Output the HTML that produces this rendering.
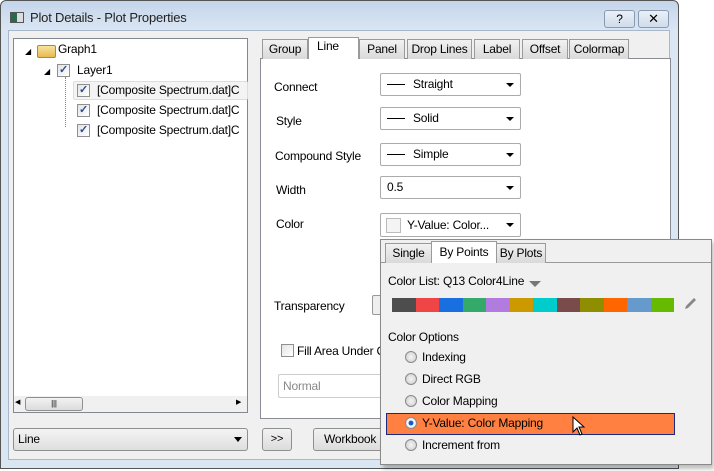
<!DOCTYPE html>
<html><head><style>
*{box-sizing:border-box;margin:0;padding:0}
body{width:714px;height:471px;background:#fff;font-family:"Liberation Sans",sans-serif;font-size:12px;color:#000;position:relative;overflow:hidden;letter-spacing:-0.2px}
.a{position:absolute}
.win{left:0;top:0;width:679px;height:469px;border:1px solid #555;border-radius:6px 6px 0 0;background:linear-gradient(#c4d5ea,#dbe6f3 30px,#dbe6f3)}
.client{left:8px;top:30px;width:662px;height:430px;background:#f0f0f0;border:1px solid #a8b8cc}
.btn{border:1px solid #8e8f8f;border-radius:3px;background:linear-gradient(#f2f2f2,#dcdcdc)}
.tab{top:39px;height:20px;border:1px solid #9a9a9a;border-bottom:none;background:linear-gradient(#f2f2f2,#d9d9d9);text-align:center;line-height:19px}
.combo{left:380px;width:141px;height:23px;border:1px solid #ababab;border-radius:2px;background:#fff;padding-left:6px;line-height:21px}
.combo:after{content:"";position:absolute;right:6px;top:9px;border:4px solid transparent;border-top:4px solid #000;border-bottom:none}
.dash{display:inline-block;width:18px;border-top:1px solid #000;vertical-align:middle;margin-right:8px}
.cb{width:13px;height:13px;border:1px solid #8f8f8f;background:linear-gradient(135deg,#e4e4e4,#fff)}
.ck{color:#2a4a9a;font-size:11px;line-height:11px;text-align:center;font-weight:bold}
.radio{width:12px;height:12px;border-radius:50%;border:1px solid #8a8a8a;background:radial-gradient(#f4f4f4,#ccc)}
</style></head><body>
<div class="a win"></div>
<div class="a" style="left:10px;top:12px;width:14px;height:11px;border:1px solid #555;background:linear-gradient(90deg,#2a6a4a 50%,#ddd 50%)"></div>
<div class="a" style="left:30px;top:10px;font-size:13px;color:#222">Plot Details - Plot Properties</div>
<div class="a btn" style="left:604px;top:10px;width:31px;height:18px;text-align:center;line-height:16px;background:linear-gradient(#eaf0f8,#d0dcea);border-color:#8a9ab0">?</div>
<div class="a btn" style="left:638px;top:10px;width:31px;height:18px;text-align:center;line-height:16px;background:linear-gradient(#eaf0f8,#d0dcea);border-color:#8a9ab0;font-size:13px">✕</div>
<div class="a client"></div>
<!-- tree -->
<div class="a" style="left:13px;top:38px;width:235px;height:375px;background:#fff;border:1px solid #828790"></div>
<div class="a" style="left:25px;top:47px;font-size:8px">◢</div>
<div class="a" style="left:37px;top:45px;width:19px;height:13px;background:linear-gradient(#f8e4a0,#e8b850);border:1px solid #b08a30;border-radius:2px"></div>
<div class="a" style="left:58px;top:42px">Graph1</div>
<div class="a" style="left:44px;top:67px;font-size:8px">◢</div>
<div class="a cb ck" style="left:57px;top:64px">✓</div>
<div class="a" style="left:77px;top:63px">Layer1</div>
<div class="a" style="left:73px;top:81px;width:175px;height:19px;background:#f4f4f4;border:1px solid #ddd;border-radius:2px"></div>
<div class="a" style="left:65px;top:77px;height:50px;border-left:1px dotted #888"></div>
<div class="a cb ck" style="left:77px;top:84px">✓</div>
<div class="a" style="left:97px;top:83px;width:150px;overflow:hidden;white-space:nowrap">[Composite Spectrum.dat]C</div>
<div class="a cb ck" style="left:77px;top:104px">✓</div>
<div class="a" style="left:97px;top:103px;width:150px;overflow:hidden;white-space:nowrap">[Composite Spectrum.dat]C</div>
<div class="a cb ck" style="left:77px;top:124px">✓</div>
<div class="a" style="left:97px;top:123px;width:150px;overflow:hidden;white-space:nowrap">[Composite Spectrum.dat]C</div>
<div class="a" style="left:14px;top:396px;width:233px;height:16px;background:#f0f0f0"></div>
<div class="a btn" style="left:25px;top:397px;width:58px;height:14px;text-align:center;font-size:8px;line-height:12px">|||</div>
<div class="a" style="left:15px;top:398px;font-size:7px">◀</div>
<div class="a" style="left:236px;top:398px;font-size:7px">▶</div>
<!-- tabs -->
<div class="a" style="left:260px;top:58px;width:411px;height:361px;background:#fff;border:1px solid #898c95"></div>
<div class="a tab" style="left:262px;width:46px">Group</div>
<div class="a tab" style="left:308px;top:37px;width:51px;height:22px;background:#fff;text-align:left;padding-left:8px;line-height:17px">Line</div>
<div class="a tab" style="left:359px;width:46px">Panel</div>
<div class="a tab" style="left:407px;width:65px">Drop Lines</div>
<div class="a tab" style="left:474px;width:46px">Label</div>
<div class="a tab" style="left:522px;width:46px">Offset</div>
<div class="a tab" style="left:569px;width:60px">Colormap</div>
<div class="a" style="left:274px;top:80px">Connect</div>
<div class="a" style="left:276px;top:114px">Style</div>
<div class="a" style="left:275px;top:149px">Compound Style</div>
<div class="a" style="left:276px;top:183px">Width</div>
<div class="a" style="left:276px;top:217px">Color</div>
<div class="a" style="left:274px;top:299px">Transparency</div>
<div class="a combo" style="top:73px"><span class="dash"></span>Straight</div>
<div class="a combo" style="top:107px"><span class="dash"></span>Solid</div>
<div class="a combo" style="top:143px"><span class="dash"></span>Simple</div>
<div class="a combo" style="top:176px">0.5</div>
<div class="a combo btn" style="top:213px;height:24px;padding-left:26px;line-height:22px">Y-Value: Color...</div>
<div class="a" style="left:386px;top:218px;width:15px;height:15px;border:1px solid #bbb;background:#f4f4f4"></div>
<div class="a" style="left:372px;top:295px;width:10px;height:20px;border:1px solid #999;border-radius:2px;background:#eee"></div>
<div class="a cb" style="left:281px;top:344px"></div>
<div class="a" style="left:297px;top:344px">Fill Area Under C</div>
<div class="a" style="left:278px;top:374px;width:110px;height:24px;border:1px solid #ccc;border-radius:2px;color:#888;padding-left:4px;line-height:22px">Normal</div>
<!-- bottom -->
<div class="a btn" style="left:13px;top:428px;width:235px;height:23px;padding-left:4px;line-height:21px;background:linear-gradient(#f4f4f4,#dedede)">Line</div>
<div class="a" style="left:234px;top:437px;border:4px solid transparent;border-top:5px solid #000"></div>
<div class="a btn" style="left:262px;top:428px;width:30px;height:23px;text-align:center;line-height:21px;font-size:11px">&gt;&gt;</div>
<div class="a btn" style="left:313px;top:428px;width:80px;height:23px;padding-left:10px;line-height:21px">Workbook</div>
<!-- popup -->
<div class="a" style="left:383px;top:242px;width:331px;height:227px;background:rgba(0,0,0,.25);filter:blur(2px)"></div>
<div class="a" style="left:380px;top:239px;width:332px;height:226px;background:#f0f0f0;border:1px solid #8a8a8a"></div>
<div class="a" style="left:381px;top:262px;width:330px;border-top:1px solid #999"></div>
<div class="a tab" style="left:385px;top:243px;width:47px">Single</div>
<div class="a tab" style="left:431px;top:241px;width:66px;height:22px;background:#fff;line-height:20px">By Points</div>
<div class="a tab" style="left:496px;top:243px;width:50px">By Plots</div>
<div class="a" style="left:388px;top:274px">Color List: Q13 Color4Line</div>
<div class="a" style="left:529px;top:281px;border:6px solid transparent;border-top:6px solid #777;border-bottom:none"></div>
<div class="a" style="left:392px;top:298px;height:14px;width:282px;display:flex">
<div style="flex:1;background:#4d4d4d"></div><div style="flex:1;background:#ef4545"></div><div style="flex:1;background:#196ee0"></div><div style="flex:1;background:#33aa6a"></div><div style="flex:1;background:#b27be0"></div><div style="flex:1;background:#cc9900"></div><div style="flex:1;background:#00cccc"></div><div style="flex:1;background:#7a4b4b"></div><div style="flex:1;background:#8e8e00"></div><div style="flex:1;background:#ff6600"></div><div style="flex:1;background:#6699cc"></div><div style="flex:1;background:#66bb00"></div></div>
<svg class="a" style="left:682px;top:296px" width="16" height="16"><path d="M3 13 L4 10 L12 2 L14 4 L6 12 Z" fill="#888"/></svg>
<div class="a" style="left:388px;top:330px">Color Options</div>
<div class="a" style="left:386px;top:413px;width:289px;height:22px;background:#ff8040;border:1px solid #1a2a80"></div>
<div class="a radio" style="left:405px;top:351px"></div><div class="a" style="left:422px;top:350px">Indexing</div>
<div class="a radio" style="left:405px;top:373px"></div><div class="a" style="left:422px;top:372px">Direct RGB</div>
<div class="a radio" style="left:405px;top:395px"></div><div class="a" style="left:422px;top:394px">Color Mapping</div>
<div class="a radio" style="left:405px;top:417px;background:radial-gradient(#1a5acc 30%,#fff 40%,#ccc)"></div><div class="a" style="left:422px;top:416px">Y-Value: Color Mapping</div>
<div class="a radio" style="left:405px;top:439px"></div><div class="a" style="left:422px;top:438px">Increment from</div>
<svg class="a" style="left:572px;top:416px" width="14" height="20"><path d="M1 1 L1 16 L5 12 L8 19 L10 18 L7 11 L12 11 Z" fill="#fff" stroke="#000"/></svg>
</body></html>
